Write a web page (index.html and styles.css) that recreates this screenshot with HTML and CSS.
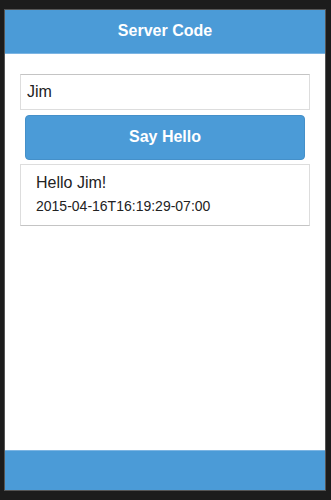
FILE: index.html
```html
<!DOCTYPE html>
<html>
<head>
<meta charset="utf-8">
<link rel="stylesheet" href="styles.css">
</head>
<body>
<div class="frame">
  <header class="bar-header"><h1 class="title">Server Code</h1></header>
  <main class="content">
    <input class="name-input" type="text" value="Jim">
    <button class="say-btn">Say Hello</button>
    <div class="card">
      <div class="greeting">Hello Jim!</div>
      <div class="stamp">2015-04-16T16:19:29-07:00</div>
    </div>
  </main>
  <footer class="bar-footer"></footer>
</div>
</body>
</html>
```
FILE: styles.css
```css
html, body {
  margin: 0;
  padding: 0;
  background: #1c1c1c;
  height: 100%;
}
body {
  font-family: "Liberation Sans", Arial, sans-serif;
  padding: 9px 5px 9px 4px;
  box-sizing: border-box;
}
.frame {
  width: 322px;
  height: 482px;
  box-sizing: border-box;
  border: 1px solid #555;
  background: #fff;
  display: flex;
  flex-direction: column;
}
.bar-header {
  height: 44px;
  box-sizing: border-box;
  background: #4b9bd7;
  border-bottom: 1px solid #7cb5e3;
  display: flex;
  align-items: center;
  justify-content: center;
}
.title {
  margin: 0;
  color: #fff;
  font-size: 16px;
  font-weight: bold;
  line-height: 20px;
  padding-bottom: 1px;
}
.content {
  flex: 1;
  padding: 20px 15px 0 15px;
  display: flex;
  flex-direction: column;
}
.name-input {
  height: 36px;
  box-sizing: border-box;
  margin: 0;
  border: 1px solid #ddd;
  border-top-color: #c4c4c4;
  padding: 0 6px;
  font-family: "Liberation Sans", Arial, sans-serif;
  font-size: 16px;
  color: #222;
  outline: none;
  background: #fff;
}
.say-btn {
  margin: 5px 5px 4px 5px;
  height: 45px;
  border: 1px solid #4590c9;
  border-radius: 4px;
  background: #4b9bd7;
  color: #fff;
  font-family: "Liberation Sans", Arial, sans-serif;
  font-size: 16px;
  font-weight: bold;
  padding: 0 0 2px 0;
}
.card {
  border: 1px solid #ddd;
  border-bottom-color: #c4c4c4;
  padding: 8px 15px 9px 15px;
  color: #222;
}
.greeting {
  font-size: 16px;
  line-height: 20px;
}
.stamp {
  font-size: 14px;
  line-height: 20px;
  margin-top: 3px;
}
.bar-footer {
  height: 40px;
  box-sizing: border-box;
  background: #4b9bd7;
  border-top: 1px solid #7cb5e3;
}
```
